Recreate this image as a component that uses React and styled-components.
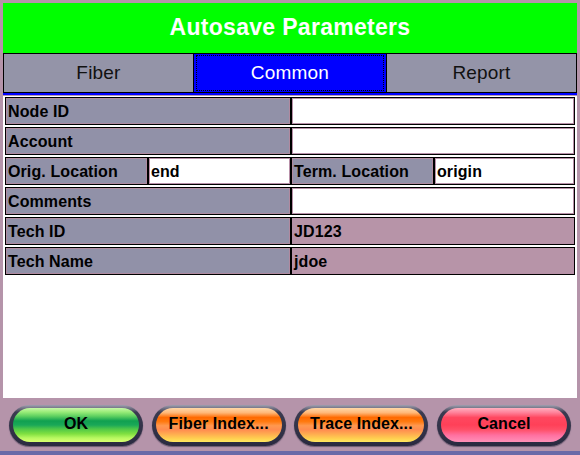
import React from "react";
import styled, { createGlobalStyle } from "styled-components";

const GlobalStyle = createGlobalStyle`
  html, body {
    margin: 0;
    padding: 0;
    background: #b594aa;
  }
  * {
    box-sizing: border-box;
  }
`;

const rows = [
  { label: "Node ID", value: "" },
  { label: "Account", value: "" },
  { split: true, label: "Orig. Location", value: "end", label2: "Term. Location", value2: "origin" },
  { label: "Comments", value: "" },
  { label: "Tech ID", value: "JD123", locked: true },
  { label: "Tech Name", value: "jdoe", locked: true },
];

const buttons = [
  { text: "OK", kind: "green" },
  { text: "Fiber Index...", kind: "orange" },
  { text: "Trace Index...", kind: "orange" },
  { text: "Cancel", kind: "red" },
];

const gradients = {
  green:
    "linear-gradient(#c8f7a8 0%, #98ec78 12%, #5ed060 24%, #10a050 38%, #1aa858 50%, #50c848 62%, #80e040 76%, #b8f860 88%, #d8ff70 100%)",
  orange:
    "linear-gradient(#ffd8a8 0%, #ffb878 14%, #ff6a00 28%, #ff7a10 40%, #ff9850 52%, #ff8c50 64%, #ffb050 78%, #ffd050 90%, #ffe860 100%)",
  red:
    "linear-gradient(#ffb0c0 0%, #ff8098 14%, #ff4860 28%, #ff4058 50%, #ff5068 64%, #ff70a0 80%, #ff90b8 100%)",
};

const App = () => {
  return (
    <Screen>
      <GlobalStyle />
      <Header>Autosave Parameters</Header>
      <Tabs>
        <Tab>Fiber</Tab>
        <Tab active>Common</Tab>
        <Tab>Report</Tab>
      </Tabs>
      <Panel>
        {rows.map((row) =>
          row.split ? (
            <Row key={row.label}>
              <Half>
                <Label>{row.label}</Label>
                <Value>{row.value}</Value>
              </Half>
              <Half>
                <Label>{row.label2}</Label>
                <Value>{row.value2}</Value>
              </Half>
            </Row>
          ) : (
            <Row key={row.label}>
              <Label>{row.label}</Label>
              <Value locked={row.locked}>{row.value}</Value>
            </Row>
          )
        )}
      </Panel>
      <ButtonBar>
        {buttons.map((b) => (
          <PillOuter key={b.text}>
            <Pill kind={b.kind}>{b.text}</Pill>
          </PillOuter>
        ))}
      </ButtonBar>
      <BottomStrip />
    </Screen>
  );
};

export default App;

const Screen = styled.div`
  width: 580px;
  height: 455px;
  background: #b594aa;
  display: flex;
  flex-direction: column;
  padding: 3px 3px 0 3px;
  font-family: "Liberation Sans", Arial, sans-serif;
`;

const Header = styled.div`
  height: 50px;
  background: #00ff00;
  color: #ffffff;
  font-weight: bold;
  font-size: 23px;
  letter-spacing: 0.3px;
  display: flex;
  align-items: center;
  justify-content: center;
  padding-bottom: 1px;
`;

const Tabs = styled.div`
  display: grid;
  grid-template-columns: 191px 192px 1fr;
  height: 42px;
  border-bottom: 2px solid #0000ff;
`;

const Tab = styled.div`
  background: ${(p) => (p.active ? "#0000ff" : "#9494a8")};
  color: ${(p) => (p.active ? "#ffffff" : "#111111")};
  border: 1px solid #000000;
  border-left-width: ${(p) => (p.active ? "0" : "1px")};
  border-right-width: ${(p) => (p.active ? "0" : "1px")};
  outline: ${(p) => (p.active ? "1px dotted #000000" : "none")};
  outline-offset: -3px;
  font-size: 19px;
  letter-spacing: 0.2px;
  display: flex;
  align-items: center;
  justify-content: center;
  padding-bottom: 1px;
`;

const Panel = styled.div`
  margin-top: 1px;
  height: 302px;
  background: #ffffff;
  padding: 1px 2px;
  display: flex;
  flex-direction: column;
  gap: 2px;
`;

const Row = styled.div`
  display: grid;
  grid-template-columns: 286px 1fr;
  height: 28px;
`;

const Half = styled.div`
  display: grid;
  grid-template-columns: 143px 1fr;
`;

const Label = styled.div`
  background: #9191a8;
  border: 1px solid #000000;
  box-shadow: inset 0 0 0 1px #b08aa0;
  color: #000000;
  font-weight: bold;
  font-size: 16px;
  letter-spacing: 0.1px;
  display: flex;
  align-items: center;
  padding-left: 2px;
  padding-top: 1px;
  white-space: nowrap;
`;

const Value = styled.div`
  background: ${(p) => (p.locked ? "#b794a8" : "#ffffff")};
  border: 1px solid #000000;
  box-shadow: inset 0 0 0 1px #b890a8;
  color: #000000;
  font-weight: bold;
  font-size: 16px;
  letter-spacing: 0.1px;
  display: flex;
  align-items: center;
  padding-left: 2px;
  padding-top: 1px;
  white-space: nowrap;
`;

const ButtonBar = styled.div`
  flex: 1;
  display: flex;
  align-items: center;
  justify-content: space-between;
  padding: 2px 6px 0 6px;
`;

const PillOuter = styled.div`
  width: 134px;
  height: 41px;
  border-radius: 21px;
  background: linear-gradient(#a0a0b0 0%, #3a3a50 18%, #2a2a40 100%);
  padding: 3px 4px 4px 4px;
  box-shadow: 0 1px 1px #6a5a70;
`;

const Pill = styled.div`
  height: 100%;
  border-radius: 17px;
  background: ${(p) => gradients[p.kind]};
  color: #000000;
  font-weight: bold;
  font-size: 16px;
  letter-spacing: 0.1px;
  display: flex;
  align-items: center;
  justify-content: center;
  padding-bottom: 2px;
`;

const BottomStrip = styled.div`
  height: 4px;
  margin: 0 -3px;
  background: #6a6aa8;
`;
